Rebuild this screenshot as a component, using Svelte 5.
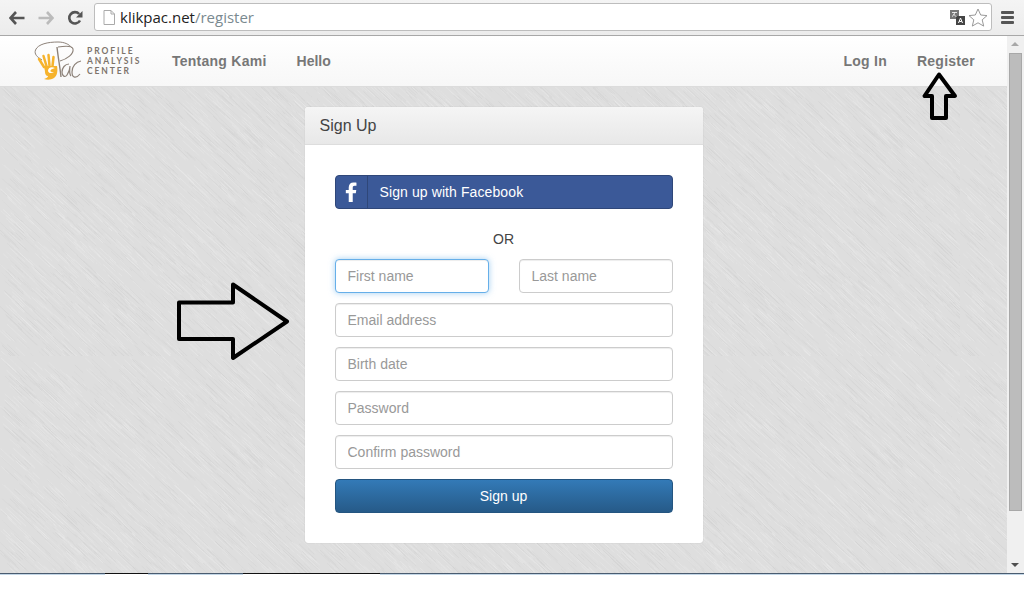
<script>
  // deterministic streaks for the brushed background
  let seed = 7;
  function rnd() {
    seed = (seed * 16807) % 2147483647;
    return seed / 2147483647;
  }
  const streaks = [];
  for (let i = 0; i < 2600; i++) {
    const x = rnd() * 320;
    const y = rnd() * 320;
    const len = 8 + rnd() * 22;
    const dark = rnd() > 0.5;
    streaks.push({
      x1: x,
      y1: y,
      x2: x + len * 0.73,
      y2: y + len * 0.68,
      color: dark ? '#cfcfcf' : '#ebebeb',
      op: 0.2 + rnd() * 0.35
    });
  }

  const rows = ['Email address', 'Birth date', 'Password', 'Confirm password'];
</script>

<div class="screen">
  <header class="toolbar">
    <div class="nav-icons">
      <svg width="16" height="14" viewBox="0 0 16 14" class="arrow-back">
        <path d="M7 1 1.500 7 7 13M2 7h13.500" fill="none" stroke="#555" stroke-width="2.600"/>
      </svg>
      <svg width="16" height="14" viewBox="0 0 16 14" class="arrow-fwd">
        <path d="M9 1l5.500 6L9 13M14 7H.5" fill="none" stroke="#bbb" stroke-width="2.600"/>
      </svg>
      <svg width="16" height="16" viewBox="0 0 16 16" class="reload">
        <path d="M13 10.500A5.700 5.700 0 1 1 12.200 4" fill="none" stroke="#555" stroke-width="2.600"/>
        <path d="M15.500 1v6.500H9z" fill="#555"/>
      </svg>
    </div>
    <div class="omnibox">
      <svg width="12" height="15" viewBox="0 0 12 15" class="page-icon">
        <path d="M1 .5h7l3.500 3.500v10.500H1zM8 .5V4h3.500" fill="#fff" stroke="#aaa"/>
      </svg>
      <span class="url"><span class="host">klikpac.net</span>/register</span>
      <svg width="15" height="15" viewBox="0 0 15 15" class="translate">
        <rect x="0" y="0" width="9" height="9" fill="#777"/>
        <rect x="6" y="6" width="9" height="9" fill="#444"/>
        <path d="M2 2.500h5M4.500 2.500c0 2-1 3-2.500 4M3.500 4c.5 1 1.500 2 3 2.500" fill="none" stroke="#fff" stroke-width=".8"/>
        <path d="M8.500 13l2-5 2 5M9.300 11.500h2.400" fill="none" stroke="#fff"/>
      </svg>
      <svg width="20" height="19" viewBox="0 0 20 19" class="star">
        <path d="M10 1l2.700 6 6.300.6-4.800 4.200 1.500 6.300L10 14.800 4.300 18.100l1.500-6.300L1 7.600 7.300 7z" fill="#fff" stroke="#999"/>
      </svg>
    </div>
    <div class="menu"><i></i><i></i><i></i></div>
  </header>

  <div class="viewport">
    <svg class="texture" width="100%" height="100%" aria-hidden="true">
      <defs>
        <pattern id="brush" width="320" height="320" patternUnits="userSpaceOnUse">
          <rect width="320" height="320" fill="#dedede"/>
          {#each streaks as s}
            <line x1={s.x1} y1={s.y1} x2={s.x2} y2={s.y2} stroke={s.color} stroke-opacity={s.op}/>
          {/each}
        </pattern>
      </defs>
      <rect width="100%" height="100%" fill="url(#brush)"/>
    </svg>

    <div class="page">
      <nav class="navbar">
        <div class="logo">
          <svg width="52" height="44" viewBox="0 0 52 44">
            <!-- outer swirl -->
            <path d="M8 21C3 18 0 15 1.500 11 4 5 14 3 24 3c6 0 11 2 14 6" fill="none" stroke="#8d8279" stroke-width="1"/>
            <!-- P -->
            <path d="M23 8c1 10 3 20 4 30" fill="none" stroke="#8d8279" stroke-width="1.400"/>
            <path d="M24 8c6-1 14-2 15 2 1 5-6 10-13 12" fill="none" stroke="#8d8279" stroke-width="1.100"/>
            <!-- a -->
            <path d="M35 25c-4 0-7 4-7 8 0 4 3 6 5 3 2-3 3-6 3-9-.5 4-1 8 1 10" fill="none" stroke="#8d8279" stroke-width="1.200"/>
            <!-- c -->
            <path d="M47 22c-5 1-9 5-9 11 0 6 4 7 8 2" fill="none" stroke="#8d8279" stroke-width="1.200"/>
            <!-- hand -->
            <path d="M5 20l5 8M9.500 17l3 10M14.500 16l1 11M19.500 18l-1 9" fill="none" stroke="#f6b32c" stroke-width="2.500" stroke-linecap="round"/>
            <path d="M10 27h13c1 5 0 10-3 12-3 2-7 2-10 1 3-1 4-2 4-3-2 0-3-2-3-4 0-2-1-4-1-6z" fill="#f6b32c"/>
            <path d="M21 29c-4-2-7 0-7 3 .5 2 3 3 6 1-2 0-4 0-3.500-1.500.5-1.500 3-2 4.500-2.500z" fill="#fff"/>
          </svg>
          <div class="logo-text">
            <span>PROFILE</span>
            <span>ANALYSIS</span>
            <span>CENTER</span>
          </div>
        </div>
        <ul class="links">
          <li>Tentang Kami</li>
          <li class="tight">Hello</li>
        </ul>
        <ul class="links right">
          <li>Log In</li>
          <li>Register</li>
        </ul>
      </nav>

      <main class="content">
        <section class="card">
          <h3 class="card-head">Sign Up</h3>
          <form class="card-body" on:submit|preventDefault>
            <button type="button" class="fb">
              <span class="fb-icon">
                <svg width="12" height="20" viewBox="0 0 13 22">
                  <path d="M4 22V12.500H.8V8.700H4V6C4 2.500 6 .5 9.300.5c1.300 0 2.700.1 3.200.2v3.400h-2C9 4.100 8.400 4.900 8.400 6.200v2.500h3.900l-.5 3.800H8.400V22z" fill="#fff"/>
                </svg>
              </span>
              <span class="fb-label">Sign up with Facebook</span>
            </button>
            <p class="or">OR</p>
            <div class="name-row">
              <input class="focused" placeholder="First name" />
              <input placeholder="Last name" />
            </div>
            {#each rows as r}
              <input placeholder={r} />
            {/each}
            <button type="button" class="submit">Sign up</button>
          </form>
        </section>
      </main>
    </div>

    <aside class="scrollbar">
      <span class="tri up"></span>
      <div class="track"><div class="thumb"></div></div>
      <span class="tri down"></span>
    </aside>

    <svg class="mark big" width="116" height="82" viewBox="0 0 116 82">
      <path d="M3 21.500H57V3.500L111 40.500 57 77V58H3z" fill="none" stroke="#000" stroke-width="4" stroke-linejoin="round"/>
    </svg>
    <svg class="mark small" width="38" height="50" viewBox="0 0 38 50">
      <path d="M19 3.500 35 25H26V47H12V25H4.500z" fill="none" stroke="#000" stroke-width="4" stroke-linejoin="round"/>
    </svg>
  </div>
  <div class="bottom-line"></div>
</div>

<style>
  :global(body) {
    margin: 0;
    background: #fff;
  }

  .screen {
    width: 1024px;
    height: 600px;
    overflow: hidden;
    display: flex;
    flex-direction: column;
    font-family: "Liberation Sans", Arial, sans-serif;
  }

  .toolbar {
    height: 35px;
    flex: none;
    display: flex;
    align-items: center;
    background: linear-gradient(#f4f4f4, #ececec);
    border-bottom: 1px solid #a8a8a8;
    box-sizing: content-box;
  }

  .nav-icons {
    width: 94px;
    display: flex;
    align-items: center;
    flex: none;
  }

  .arrow-back { margin-left: 9px; }
  .arrow-fwd { margin-left: 13px; }
  .reload { margin-left: 13px; }

  .omnibox {
    width: 896px;
    height: 26px;
    margin-top: -1px;
    flex: none;
    display: flex;
    align-items: center;
    background: #fff;
    border: 1px solid #bdbdbd;
    border-radius: 3px;
  }

  .page-icon { margin-left: 8px; }

  .url {
    margin-left: 5px;
    flex: 1;
    font-family: "Open Sans", sans-serif;
    font-size: 15px;
    color: #7a8a90;
  }

  .host { color: #222; }

  .translate { margin-right: 3px; margin-left: 2px; }
  .star { margin-right: 3px; }

  .menu {
    margin-left: 9px;
    width: 13px;
    display: flex;
    flex-direction: column;
    gap: 2px;
  }

  .menu i {
    display: block;
    height: 3px;
    background: #555;
    border-radius: 1px;
  }

  .viewport {
    position: relative;
    height: 537px;
    flex: none;
    display: flex;
  }

  .texture {
    position: absolute;
    inset: 0;
  }

  .page {
    position: relative;
    width: 1007px;
    flex: none;
  }

  .navbar {
    height: 50px;
    display: flex;
    align-items: center;
    background: linear-gradient(#fff, #f7f7f7);
    border-bottom: 1px solid #dcdcdc;
  }

  .logo {
    margin-left: 34px;
    width: 138px;
    flex: none;
    display: flex;
    align-items: center;
  }

  .logo svg { margin-right: 1px; }

  .logo-text {
    display: flex;
    flex-direction: column;
    font-family: Lato, sans-serif;
    font-weight: 700;
    font-size: 8.500px;
    line-height: 10px;
    letter-spacing: 1.900px;
    color: #7d746c;
    white-space: nowrap;
  }

  .links {
    list-style: none;
    margin: 0;
    padding: 0;
    display: flex;
    gap: 30px;
    font-size: 14px;
    font-weight: 700;
    letter-spacing: .25px;
    color: #777;
  }

  .links .tight {
    letter-spacing: 0;
  }

  .links.right {
    margin-left: auto;
    margin-right: 32px;
  }

  .content {
    display: flex;
    justify-content: center;
    padding-top: 20px;
  }

  .card {
    width: 398px;
    background: #fff;
    border-radius: 3px;
    box-shadow: 0 0 1px rgba(0, 0, 0, .2);
  }

  .card-head {
    margin: 0;
    height: 38px;
    box-sizing: border-box;
    padding: 0 15px;
    line-height: 37px;
    font-size: 16px;
    font-weight: 400;
    color: #444;
    background: linear-gradient(#f5f5f5, #e8e8e8);
    border-bottom: 1px solid #ddd;
    border-radius: 3px 3px 0 0;
  }

  .card-body {
    padding: 30px;
    display: flex;
    flex-direction: column;
    gap: 10px;
  }

  .fb {
    height: 34px;
    padding: 0;
    display: flex;
    align-items: stretch;
    font: inherit;
    font-size: 14px;
    color: #fff;
    background: #3b5998;
    border: 1px solid #2f4779;
    border-radius: 4px;
  }

  .fb-icon {
    width: 31px;
    display: flex;
    align-items: center;
    justify-content: center;
    border-right: 1px solid #2f4779;
  }

  .fb-label {
    margin-left: 12px;
    line-height: 32px;
    letter-spacing: .1px;
  }

  .or {
    margin: 10px 0 0;
    height: 20px;
    line-height: 20px;
    text-align: center;
    font-size: 14px;
    color: #444;
  }

  .name-row {
    display: flex;
    gap: 30px;
  }

  .name-row input {
    width: 154px;
  }

  input {
    height: 34px;
    width: 338px;
    box-sizing: border-box;
    padding: 6px 12px;
    font: inherit;
    font-size: 14px;
    color: #555;
    background: #fff;
    border: 1px solid #ccc;
    border-radius: 4px;
    outline: none;
    box-shadow: inset 0 1px 1px rgba(0, 0, 0, .075);
  }

  input::placeholder {
    color: #999;
    opacity: 1;
  }

  input.focused {
    border-color: #66afe9;
    box-shadow: inset 0 1px 1px rgba(0, 0, 0, .075), 0 0 6px rgba(102, 175, 233, .6);
  }

  .submit {
    height: 34px;
    padding: 0;
    font: inherit;
    font-size: 14px;
    color: #fff;
    background: linear-gradient(#337ab7, #265a88);
    border: 1px solid #245580;
    border-radius: 4px;
  }

  .scrollbar {
    position: relative;
    width: 17px;
    flex: none;
    background: #f0f0f0;
    display: flex;
    flex-direction: column;
    align-items: center;
  }

  .track {
    flex: 1;
    width: 100%;
    padding-top: 17px;
  }

  .thumb {
    width: 13px;
    height: 458px;
    margin-left: 2px;
    box-sizing: border-box;
    background: #bcbcbc;
    border: 1px solid #a8a8a8;
  }

  .tri {
    position: absolute;
    left: 4px;
    width: 0;
    height: 0;
    border-left: 4px solid transparent;
    border-right: 4px solid transparent;
  }

  .tri.up {
    top: 6px;
    border-bottom: 4px solid #a8a8a8;
  }

  .tri.down {
    bottom: 6px;
    border-top: 4px solid #505050;
  }

  .mark {
    position: absolute;
  }

  .mark.big {
    left: 176px;
    top: 245px;
  }

  .mark.small {
    left: 920px;
    top: 35px;
  }

  .bottom-line {
    height: 2px;
    flex: none;
    background:
      linear-gradient(90deg, #4a5c70 105px, #111 105px, #111 148px, #4a5c70 148px, #4a5c70 243px, #111 243px, #111 380px, #4a5c70 380px) top / 100% 1px no-repeat,
      linear-gradient(90deg, #c3d6e6 105px, #fff 105px, #fff 148px, #c3d6e6 148px, #c3d6e6 243px, #fff 243px, #fff 380px, #c3d6e6 380px);
  }
</style>
